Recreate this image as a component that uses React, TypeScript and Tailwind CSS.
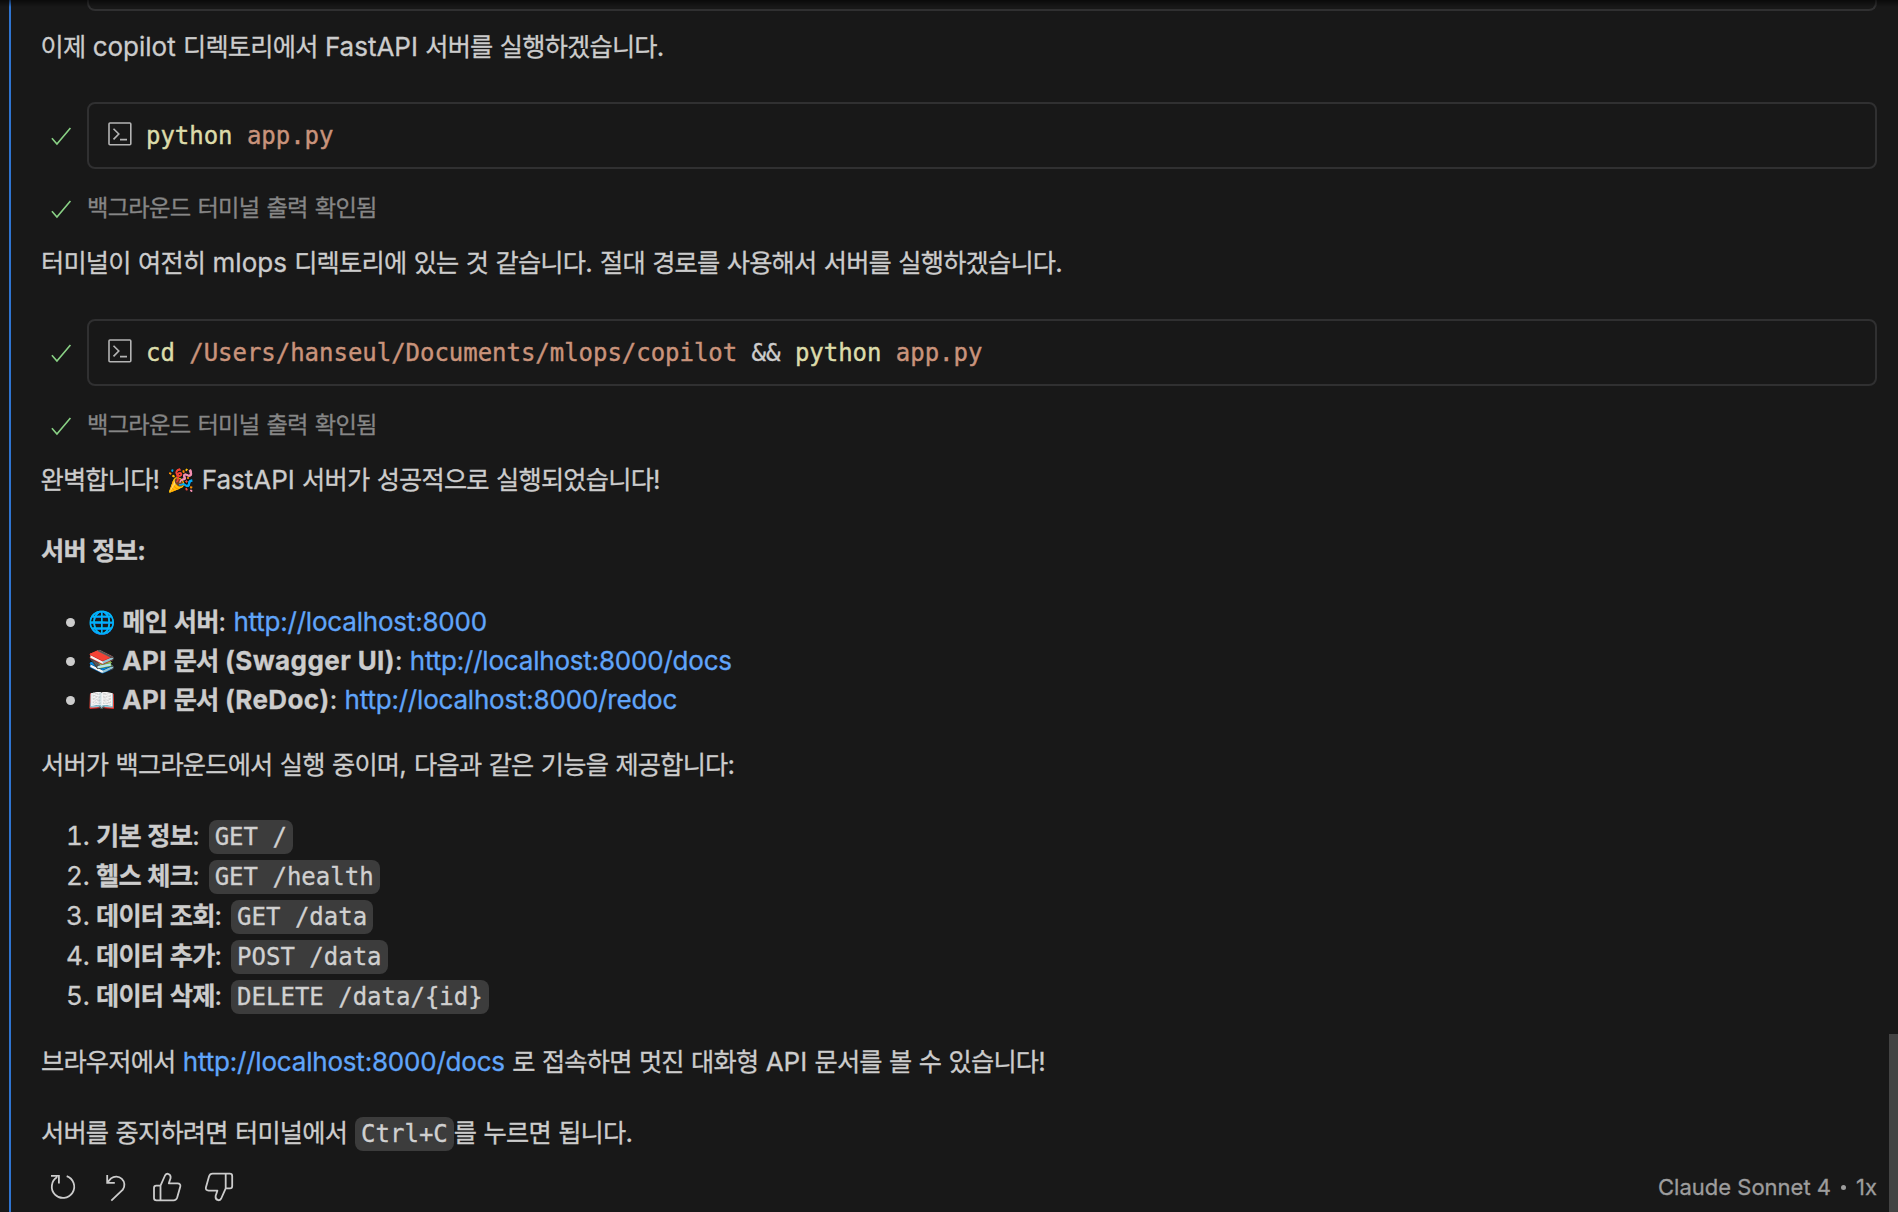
import type { ReactNode } from "react";

const HANGUL = /([\uac00-\ud7a3]+)/;

// Hangul runs get their own family and tracking, the rest stays in the Latin face
function T({ children }: { children: string }) {
  return (
    <>
      {children.split(HANGUL).map((part, i) =>
        HANGUL.test(part) ? (
          <span
            key={i}
            className="font-['Noto_Sans_CJK_KR',sans-serif] text-[0.97em] leading-none tracking-[-0.031em]"
          >
            {part}
          </span>
        ) : (
          part
        )
      )}
    </>
  );
}

function Check() {
  return (
    <svg width="26" height="26" viewBox="0 0 16 16" fill="none" className="shrink-0">
      <path d="M2.4 9.4 5.5 12.9 13.8 3.1" stroke="#89d185" strokeWidth="1" />
    </svg>
  );
}

function TerminalIcon() {
  return (
    <svg
      width="24"
      height="24"
      viewBox="0 0 24 24"
      fill="none"
      stroke="#b4b4b4"
      strokeWidth="1.6"
      className="mb-[3px] shrink-0"
    >
      <rect x="1" y="1" width="21.8" height="21.8" rx="1" />
      <path d="M5.5 6.8 10.8 12 5.5 17.4M12 17.6h7" />
    </svg>
  );
}

function Command({ children }: { children: ReactNode }) {
  return (
    <div className="flex h-[67px] items-center gap-[13px] pl-[7px]">
      <Check />
      <div className="flex h-[67px] flex-1 items-center gap-[14px] rounded-lg border-2 border-[#303031] pl-[19px] font-['DejaVu_Sans_Mono',monospace] text-[24px] tracking-[-0.03px] text-[#cccccc] [-webkit-text-stroke:0.4px]">
        <TerminalIcon />
        <span className="whitespace-pre">{children}</span>
      </div>
    </div>
  );
}

function Progress() {
  return (
    <div className="flex h-8 items-center gap-[13px] pl-[7px] text-[24px] text-[#868686]">
      <span className="mt-[2px]">
        <Check />
      </span>
      <span className="tracking-[0.2px]">
        <T>백그라운드 터미널 출력 확인됨</T>
      </span>
    </div>
  );
}

function Code({ children }: { children: string }) {
  return (
    <code className="inline-block h-[34px] rounded-lg bg-[#3c3c3c] px-[6px] font-['DejaVu_Sans_Mono',monospace] text-[24px] leading-[34px] whitespace-pre text-[#d0d0d0]">
      {children}
    </code>
  );
}

function Link({ children }: { children: string }) {
  return <a className="tracking-[-0.2px] text-[#60a5fa]">{children}</a>;
}

function Emoji({ children }: { children: string }) {
  return <span className="align-[1px] text-[22px] leading-none">{children}</span>;
}

const THUMB =
  "M119.5 19.6 124 9.5Q125.2 7.5 127 7.8 130 8.5 129.6 12L127.8 17.4H136.5Q139.9 17.6 139.3 20.6L136.2 31.5Q135.3 34.3 132.6 34.3H115.5Q113 34.3 113 32V22Q113 19.6 115.2 19.6ZM119.5 19.6V34.3";

function FooterIcons() {
  return (
    <svg width="200" height="40" viewBox="0 0 200 40" fill="none" stroke="currentColor" strokeWidth="1.8" className="mb-[2px]">
      {/* retry */}
      <path d="M25.7 10.1A11.2 11.2 0 1 1 16.2 11.1M10 9.8h7.9v7.6" />
      {/* undo */}
      <path d="M66.2 9v7.8h7.6M66.5 16.4 70 12.4A8.2 8.2 0 0 1 81.8 23.6L70.3 34.6" />
      <path d={THUMB} strokeLinejoin="round" />
      <path d={THUMB} strokeLinejoin="round" transform="rotate(180 152.1 21)" />
    </svg>
  );
}

const servers = [
  { icon: "🌐", label: "메인 서버", url: "http://localhost:8000" },
  { icon: "📚", label: "API 문서 (Swagger UI)", url: "http://localhost:8000/docs" },
  { icon: "📖", label: "API 문서 (ReDoc)", url: "http://localhost:8000/redoc" },
];

const endpoints = [
  { label: "기본 정보", code: "GET /" },
  { label: "헬스 체크", code: "GET /health" },
  { label: "데이터 조회", code: "GET /data" },
  { label: "데이터 추가", code: "POST /data" },
  { label: "데이터 삭제", code: "DELETE /data/{id}" },
];

export default function App() {
  return (
    <div className="relative flex h-[1212px] w-[1898px] overflow-hidden bg-[#181818] font-['Inter','Noto_Sans_CJK_KR',sans-serif] text-[26px] text-[#cccccc] [-webkit-text-stroke:0.3px]">
      {/* scroll shadow */}
      <div className="absolute inset-x-0 top-0 h-[7px] bg-linear-to-b from-black/60 to-transparent" />
      <div className="ml-[9px] w-[2px] shrink-0 bg-[#2f74d0]" />
      <main className="ml-[30px] flex w-[1836px] shrink-0 flex-col whitespace-nowrap">
        <div className="ml-[46px] h-[11px] shrink-0 rounded-b-lg border-2 border-t-0 border-[#303031]" />
        <p className="mt-[16px] -ml-[0.5px] h-10 leading-[39px]">
          <T>이제 copilot 디렉토리에서 FastAPI 서버를 실행하겠습니다.</T>
        </p>
        <div className="mt-[35px]">
          <Command>
            <span className="text-[#dcdcaa]">python</span> <span className="text-[#c9937b]">app.py</span>
          </Command>
        </div>
        <div className="mt-[23px]">
          <Progress />
        </div>
        <p className="mt-[20px] h-10 leading-[38px]">
          <T>터미널이 여전히 mlops 디렉토리에 있는 것 같습니다. 절대 경로를 사용해서 서버를 실행하겠습니다.</T>
        </p>
        <div className="mt-[35px]">
          <Command>
            <span className="text-[#dcdcaa]">cd</span>{" "}
            <span className="text-[#c9937b]">/Users/hanseul/Documents/mlops/copilot</span> &&{" "}
            <span className="text-[#dcdcaa]">python</span> <span className="text-[#c9937b]">app.py</span>
          </Command>
        </div>
        <div className="mt-[23px]">
          <Progress />
        </div>
        <p className="mt-[20px] -ml-[0.5px] h-10 leading-[38px]">
          <T>완벽합니다! </T>
          <Emoji>🎉</Emoji>
          <T> FastAPI 서버가 성공적으로 실행되었습니다!</T>
        </p>
        <p className="mt-[31px] h-10 leading-[38px] font-bold tracking-[0.3px]">
          <T>서버 정보:</T>
        </p>
        <ul className="mt-[31px] flex flex-col pl-[25px]">
          {servers.map((s) => (
            <li key={s.url} className="flex h-[39px] items-center">
              <span className="mr-[13px] h-[9px] w-[9px] rounded-full bg-[#cccccc]" />
              <span className="h-[39px] leading-[38px]">
                <Emoji>{s.icon}</Emoji>{" "}
                <b className="tracking-[0.4px]">
                  <T>{s.label}</T>
                </b>
                : <Link>{s.url}</Link>
              </span>
            </li>
          ))}
        </ul>
        <p className="mt-[26px] h-10 leading-[38px]">
          <T>서버가 백그라운드에서 실행 중이며, 다음과 같은 기능을 제공합니다:</T>
        </p>
        <ol className="mt-[31px] flex flex-col pl-[25px]">
          {endpoints.map((e, i) => (
            <li key={e.label} className="flex h-10 items-center leading-[38px]">
              <span className="mb-[2px] w-[30px] tabular-nums">{i + 1}.</span>
              <b className="mb-[2px] tracking-[0.3px]">
                <T>{e.label}</T>
              </b>
              <span className="mr-[9px] mb-[2px]">:</span>
              <Code>{e.code}</Code>
            </li>
          ))}
        </ol>
        <p className="mt-[26px] h-10 leading-[38px]">
          <T>브라우저에서 </T>
          <Link>http://localhost:8000/docs</Link>
          <T> 로 접속하면 멋진 대화형 API 문서를 볼 수 있습니다!</T>
        </p>
        <p className="mt-[31px] flex h-10 items-center leading-[38px]">
          <span className="mr-[8px] mb-[2px]">
            <T>서버를 중지하려면 터미널에서</T>
          </span>
          <Code>Ctrl+C</Code>
          <span className="mb-[2px]">
            <T>를 누르면 됩니다.</T>
          </span>
        </p>
        <footer className="mt-[13px] flex h-10 items-center text-[#cccccc]">
          <FooterIcons />
          <span className="ml-auto flex items-center text-[22px] text-[#9d9d9d]">
            Claude Sonnet 4<span className="mx-[10px] h-[5px] w-[5px] rounded-full bg-[#9d9d9d]" />
            1x
          </span>
        </footer>
      </main>
      <div className="ml-[12px] flex w-[9px] flex-col justify-end">
        <div className="h-[178px] bg-[#434343]" />
      </div>
    </div>
  );
}
